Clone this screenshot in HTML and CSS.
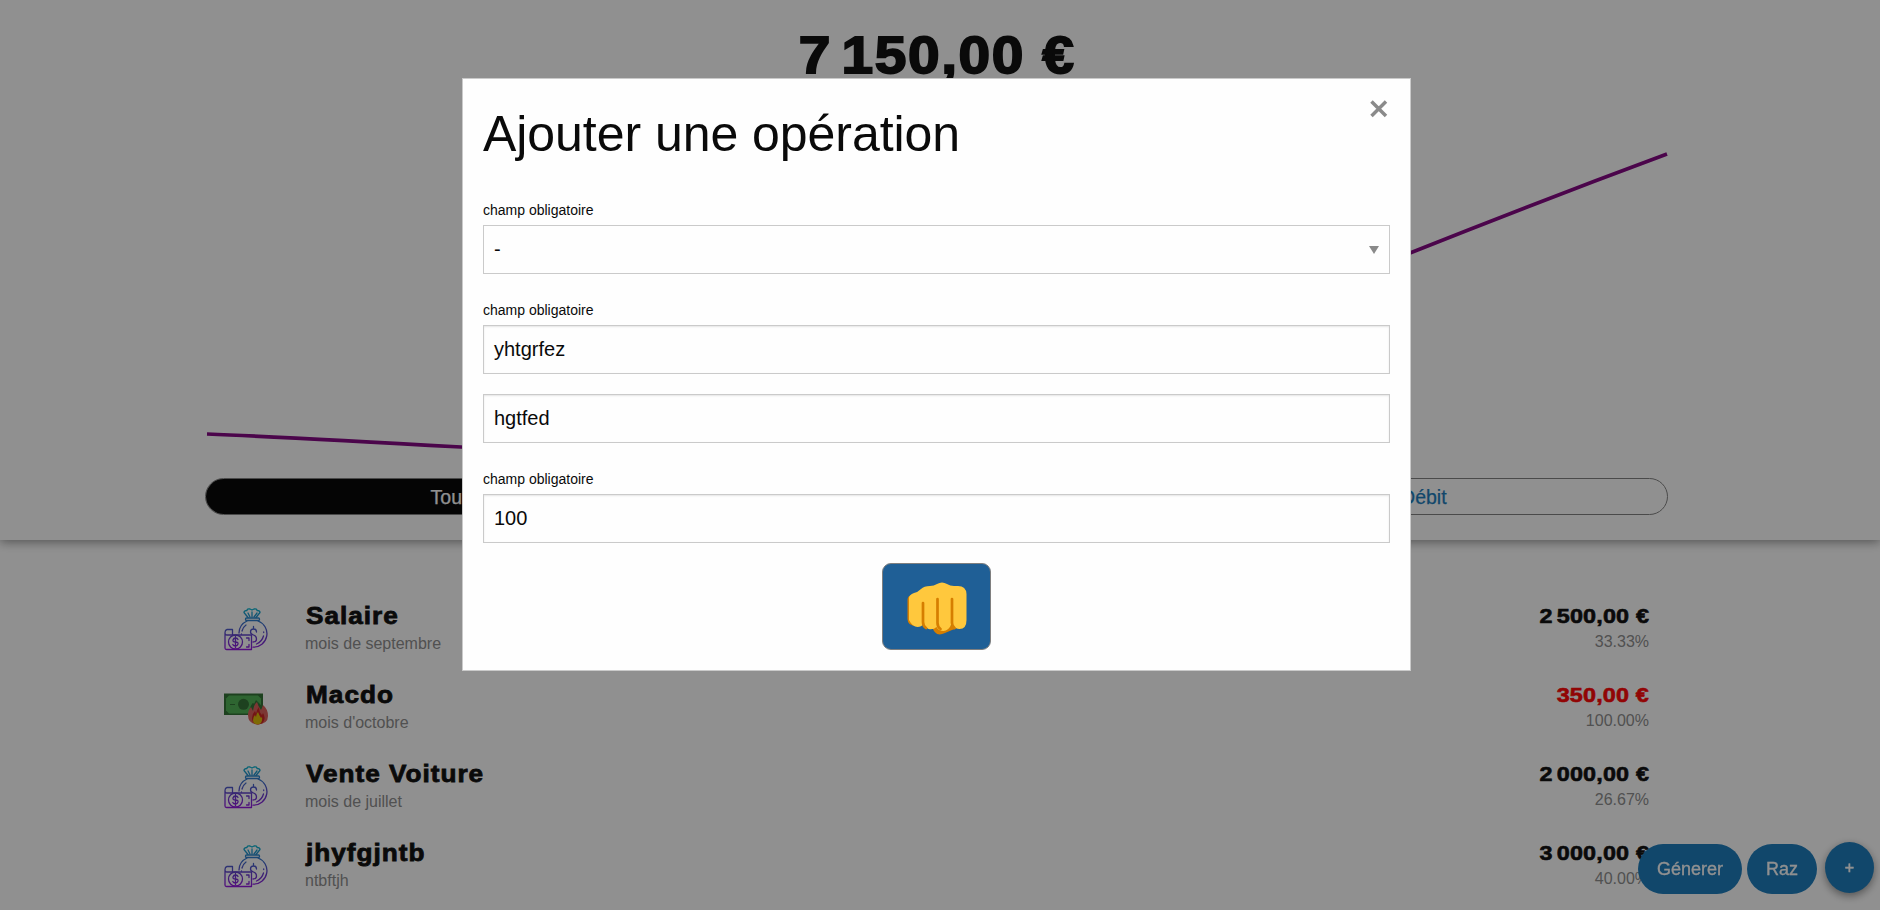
FILE: index.html
```html
<!DOCTYPE html>
<html lang="fr">
<head>
<meta charset="utf-8">
<title>Compte</title>
<link rel="stylesheet" href="styles.css">
</head>
<body>
<svg class="defs" width="0" height="0">
  <defs>
    <linearGradient id="bagGrad" gradientUnits="userSpaceOnUse" x1="0" y1="0" x2="0" y2="42">
      <stop offset="0" stop-color="#00b4cc"/>
      <stop offset=".3" stop-color="#2a78c8"/>
      <stop offset=".65" stop-color="#5c3cc8"/>
      <stop offset="1" stop-color="#9010dc"/>
    </linearGradient>
    <symbol id="bag" viewBox="0 0 44 44">
      <g fill="none" stroke="url(#bagGrad)" stroke-width="1.3" stroke-linejoin="round" stroke-linecap="round">
        <path d="M24 9.500 20 4.500q0-2 3-2 0-2 3-1.500l2 1 2-1q3-.5 3 1.500 3 0 3 2l-4 5M26 9l-2-4M28 9V4M30 9l3-4"/>
        <rect x="21.500" y="10" width="14" height="2.500" rx="1"/>
        <path d="M15 25a13.500 13.500 0 0 1 8-12M34 13a13.500 13.500 0 0 1-5 26.200M18 23a10 10 0 0 1 4-6M39.500 28a12 12 0 0 1-7 8M17.500 26v.3M39.700 24v.5"/>
        <path d="M32.500 24q0-3-3-3t-3 3q0 2 3 3t3 4q0 3-3.500 3M29.500 18.500V21"/>
        <path d="M1 25v15q0 1.500 1.500 1.500H27.500V27H3q-2 0-2-2.500t2-3H8.500V27"/>
        <circle cx="11.500" cy="34" r="7"/>
        <path d="M14 31.500q-.5-1.500-2.500-1.500T9 32t2.500 2 2.500 2-2.500 2-2.700-1.500M11.500 28.500v11M22.500 30h2.500v2.500M22.500 39h2.500v-2.500"/>
      </g>
    </symbol>
    <symbol id="burn" viewBox="0 0 44 44">
      <path fill="#2c6e30" d="M0 6.500h39V28H0z"/>
      <path fill="#4caf50" d="M5 8.500h29l3 3v12l-3 3H5l-3-3v-12z"/>
      <circle cx="19.500" cy="17.300" r="5.500" fill="#2c6e30"/>
      <path stroke="#2c6e30" d="M6 17.500h5M28 17.500h5"/>
      <path fill="#2c6e30" d="M25 28q0-7 3-11 1-2 2 0l2-4 4 4 3 4v7z"/>
      <path fill="#d95b56" d="M24 28q0-5 3-8l2 4q1-7 4-9 1 4 4 8 1-2 2-5 5 4 5 11 0 8-10.500 8.500Q24 37 24 28z"/>
      <path fill="#c81e1e" d="M28 31q0-4 3-7 1 2 1 3 1-5 3-7 0 5 3 8l1-2q2 3 1.500 6-1 5-6.500 5.500-6-.5-6-6.500z"/>
      <path fill="#ddb800" d="M29 33q0-3 2-5l1 2q0-3 2-5 1 3 3 6l1-1q1 7-4.500 7.500Q29 37 29 33z"/>
    </symbol>
  </defs>
</svg>

<div class="page">
  <header class="top">
    <h1 class="balance"><span class="wide">7<span class="thin"></span>150,00 €</span></h1>
    <svg class="chart" width="1463" height="350" viewBox="0 0 1463 350">
      <path d="M2 304 Q80 307 256 317 T560 322 C800 310 1000 200 1205 123 Q1330 73 1462 24" fill="none" stroke="#800080" stroke-width="3.700"/>
    </svg>
    <nav class="tabs">
      <a class="tab tab-active">Tous</a>
      <a class="tab">Crédit</a>
      <a class="tab">Débit</a>
    </nav>
  </header>
  <main class="list">
    <div class="row">
      <svg class="icon"><use href="#bag"/></svg>
      <div class="what"><div class="name">Salaire</div><div class="desc">mois de septembre</div></div>
      <div class="sum"><div class="amount">2<span class="thin"></span>500,00 €</div><div class="pct">33.33%</div></div>
    </div>
    <div class="row">
      <svg class="icon"><use href="#burn"/></svg>
      <div class="what"><div class="name">Macdo</div><div class="desc">mois d'octobre</div></div>
      <div class="sum"><div class="amount debit">350,00 €</div><div class="pct">100.00%</div></div>
    </div>
    <div class="row">
      <svg class="icon"><use href="#bag"/></svg>
      <div class="what"><div class="name">Vente Voiture</div><div class="desc">mois de juillet</div></div>
      <div class="sum"><div class="amount">2<span class="thin"></span>000,00 €</div><div class="pct">26.67%</div></div>
    </div>
    <div class="row">
      <svg class="icon"><use href="#bag"/></svg>
      <div class="what"><div class="name">jhyfgjntb</div><div class="desc">ntbftjh</div></div>
      <div class="sum"><div class="amount">3<span class="thin"></span>000,00 €</div><div class="pct">40.00%</div></div>
    </div>
  </main>
</div>

<div class="actions">
  <button class="pill">Génerer</button>
  <button class="pill">Raz</button>
  <button class="plus">+</button>
</div>

<div class="overlay">
  <form class="modal">
    <div class="modal-head">
      <h2 class="title">Ajouter une opération</h2>
      <button class="close" type="button" aria-label="Fermer"><svg width="18" height="18" viewBox="0 0 18 18"><path d="M1.500 1.500 16 16M16 1.500 1.500 16" stroke="#8a8a8a" stroke-width="3.500"/></svg></button>
    </div>
    <label class="label">champ obligatoire</label>
    <div class="field select"><span>-</span><svg width="10" height="8"><path d="M0 0h10L5 8z" fill="#8a8a8a"/></svg></div>
    <label class="label">champ obligatoire</label>
    <div class="field">yhtgrfez</div>
    <div class="field">hgtfed</div>
    <label class="label">champ obligatoire</label>
    <div class="field">100</div>
    <button class="submit" type="button">
      <svg width="60" height="58" viewBox="0 0 60 58">
        <path fill="#d67e00" d="M.5 20q0-4 4-5l5 10v21q-9 0-9-7zM25 46l28-1q-3 4-8 5l-7 3q-10 5-13-7z"/>
        <path fill="#ffc83d" d="M2 18q0-3 5-5 4-1 7-4 3-3 9-3 4 0 7-2 5-3 10 0 3 2 7 2h4q8 0 8.500 8v26q0 9-7 9-4 0-8-5-3 7-8 7-5 0-7-4-3 3-8 2-3-1-5-5-2 3-6 3-5 0-8.500-7z"/>
        <path fill="none" stroke="#d67e00" stroke-width="2.700" stroke-linecap="round" d="M16 23v19q0 4 3 6M30.500 19v24q0 4 3 6M45 19v24q0 3 2.500 5"/>
      </svg>
    </button>
  </form>
</div>
</body>
</html>
```
FILE: styles.css
```css
* { box-sizing: border-box; }
body {
  margin: 0;
  height: 910px;
  overflow: hidden;
  background: #fefefe;
  color: #0a0a0a;
  font-family: "Liberation Sans", Arial, sans-serif;
}
button { font-family: inherit; border: 0; padding: 0; }
.defs { display: block; height: 0; }
.page { height: 910px; overflow: hidden; }
.top {
  height: 540px;
  padding: 18px 212px 0 205px;
  box-shadow: 0 2px 10px rgba(10, 10, 10, .45);
  display: flex;
  flex-direction: column;
}
.balance {
  margin: 0;
  height: 74px;
  line-height: 75px;
  padding-left: 2px;
  text-align: center;
  font-size: 51px;
  letter-spacing: 1.400px;
  -webkit-text-stroke: 1.800px #0a0a0a;
}
.wide { display: inline-block; transform: scaleX(1.115); }
.thin { display: inline-block; width: .17em; }
.chart { display: block; margin-top: 38px; flex: none; }
.tabs {
  display: flex;
  height: 37px;
  margin-top: -2px;
  border: 1px solid #7f7f7f;
  border-radius: 19px;
  overflow: hidden;
}
.tab {
  flex: 1;
  text-align: center;
  font-size: 19.500px;
  line-height: 37px;
  color: #1779ba;
  -webkit-text-stroke: .25px;
}
.tab-active { background: #000; color: #fefefe; padding-left: 2px; }
.list { padding: 55px 224px 0 224px; }
.row { display: flex; height: 79px; }
.icon { width: 44px; height: 44px; margin-top: 13px; flex: none; }
.what { margin-left: 37px; flex: 1; }
.name {
  height: 42px;
  line-height: 42px;
  padding-left: 1px;
  font-size: 24px;
  font-weight: 700;
  letter-spacing: .9px;
  -webkit-text-stroke: .8px #0a0a0a;
  transform: scaleX(1.090);
  transform-origin: left;
}
.desc { font-size: 16px; line-height: 18px; margin-top: -2px; color: #8a8a8a; }
.sum { text-align: right; padding-right: 7px; }
.amount {
  height: 42px;
  line-height: 41px;
  font-size: 20.500px;
  font-weight: 700;
  letter-spacing: .15px;
  -webkit-text-stroke: .6px;
  transform: scaleX(1.140);
  transform-origin: right;
}
.debit { color: #f00; }
.pct { font-size: 16px; line-height: 18px; margin-top: -4px; color: #8a8a8a; }
.actions {
  position: fixed;
  right: 6px;
  bottom: 16px;
  display: flex;
  align-items: center;
}
.pill {
  height: 50px;
  border-radius: 25px;
  background: #1779ba;
  color: #fefefe;
  font-size: 18px;
  margin: 3px 5px 0 0;
  -webkit-text-stroke: .3px;
}
.pill:first-child { width: 104px; }
.pill:nth-child(2) { width: 70px; margin-right: 8px; }
.plus {
  width: 49px;
  height: 51px;
  border-radius: 50%;
  background: #1779ba;
  color: #fefefe;
  font-size: 16px;
  -webkit-text-stroke: .5px;
  box-shadow: 0 3px 8px rgba(10, 10, 10, .45);
}
.overlay {
  position: fixed;
  inset: 0;
  padding: 78px 7px 0 0;
  background: rgba(10, 10, 10, .45);
}
.modal {
  width: 949px;
  height: 593px;
  margin: 0 auto;
  padding: 16px 20px 0;
  border: 1px solid #cacaca;
  background: #fefefe;
  display: flex;
  flex-direction: column;
}
.modal-head {
  display: flex;
  justify-content: space-between;
  height: 99px;
}
.title { margin: 4px 0 0; font-weight: 400; font-size: 50px; line-height: 70px; letter-spacing: -.05px; }
.close { background: none; width: 18px; height: 18px; margin: 5px 2px 0 0; }
.close svg { display: block; }
.label { font-size: 14px; height: 31px; line-height: 32px; }
.field {
  height: 49px;
  margin-bottom: 20px;
  padding: 0 10px;
  border: 1px solid #cacaca;
  box-shadow: inset 0 1px 2px rgba(10, 10, 10, .1);
  font-size: 20px;
  line-height: 47px;
}
.select { display: flex; justify-content: space-between; align-items: center; box-shadow: none; }
.submit {
  width: 109px;
  height: 87px;
  align-self: center;
  border: 1px solid #7f7f7f;
  border-radius: 9px;
  background: #1f5f96;
}
.submit svg { display: block; margin: 4px auto 0; }
```
